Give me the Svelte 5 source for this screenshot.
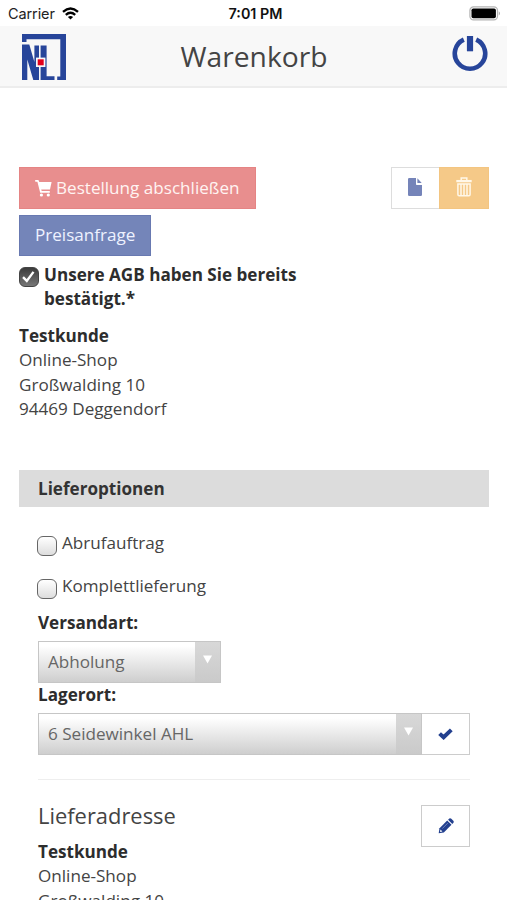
<script lang="ts">
  interface Option {
    id: string;
    label: string;
    checked: boolean;
  }

  const customer = {
    name: "Testkunde",
    lines: ["Online-Shop", "Großwalding 10", "94469 Deggendorf"],
  };

  let agbAccepted = $state(true);
  let options: Option[] = $state([
    { id: "abruf", label: "Abrufauftrag", checked: false },
    { id: "komplett", label: "Komplettlieferung", checked: false },
  ]);
</script>

{#snippet address()}
  <address>
    <strong>{customer.name}</strong>
    {#each customer.lines as line}
      <span>{line}</span>
    {/each}
  </address>
{/snippet}

{#snippet dropdown(value: string)}
  <button class="select">
    <span class="select-value">{value}</span>
    <span class="select-arrow">
      <svg width="11" height="9" viewBox="0 0 11 9"><path d="M1 .5h9L5.5 8.5z" fill="#fff" /></svg>
    </span>
  </button>
{/snippet}

<div class="screen">
  <div class="statusbar">
    <div class="carrier">
      <span>Carrier</span>
      <svg width="17" height="13" viewBox="0 0 17 13" fill="none" stroke="#000" stroke-width="2.3">
        <path d="M1 4.8Q8.5 -1.9 16 4.8" />
        <path d="M3.8 7.9Q8.5 3.7 13.2 7.9" />
        <path d="M8.5 12.6L5.9 9.9Q8.5 7.9 11.1 9.9z" fill="#000" stroke="none" />
      </svg>
    </div>
    <span class="time">7:01 PM</span>
    <svg class="battery" width="32" height="15" viewBox="0 0 32 15">
      <rect x=".9" y=".9" width="27.6" height="13" rx="3.6" fill="#fff" stroke="#b4b4b4" stroke-width="1.2" />
      <rect x="2.5" y="2.5" width="24.4" height="9.8" rx="1.8" fill="#000" />
      <path d="M29.8 5.2q2 2.2 0 4.4z" fill="#999" />
    </svg>
  </div>

  <header>
    <svg class="logo" width="46" height="48" viewBox="0 0 46 48">
      <g fill="#27459a">
        <path d="M1 1H45V47H36.2V43.5H39.3V6.3H5.5V9H1z" />
        <path d="M1 11.5H8.3L13.4 29V12.5H18V47H12.3L6.3 26.5V47H1z" />
        <path d="M19.6 12.5H25.6V43.3H33.5V47H19.6z" />
      </g>
      <rect x="15" y="24.6" width="9.4" height="9.4" fill="#f8f8f8" />
      <rect x="16.7" y="26.3" width="6" height="6" fill="#e2001a" />
    </svg>
    <h1>Warenkorb</h1>
    <svg class="power" width="36" height="37" viewBox="0 0 36 37" fill="none" stroke="#27459a">
      <path d="M11.8 4.7A15.2 15.2 0 1 0 24.2 4.7" stroke-width="4.6" />
      <path d="M18 1V16.3" stroke-width="6.2" />
    </svg>
  </header>

  <main>
    <div class="actions">
      <div class="order-buttons">
        <button class="btn order">
          <svg width="17" height="17" viewBox="0 0 17 17" fill="#fff">
            <path d="M0 .8Q0 0 .8 0H3.4L4.3 2.1H16.6L15 9.4H6.2L6.7 11H14.8V12.7H5.2L2.4 1.7H.8Q0 1.6 0 .8z" />
            <circle cx="6.4" cy="15" r="1.6" />
            <circle cx="13.3" cy="15" r="1.6" />
          </svg>
          Bestellung abschließen
        </button>
        <button class="btn inquiry">Preisanfrage</button>
      </div>
      <div class="tools">
        <button class="icon-btn faded" aria-label="Neu">
          <svg width="14" height="18" viewBox="0 0 14 18" fill="#7584b9">
            <path d="M1.2 0H8V6.3Q8 7 8.7 7H14V16.8Q14 18 12.8 18H1.2Q0 18 0 16.8V1.2Q0 0 1.2 0z" />
            <path d="M9.4 .3L13.7 5H9.4z" />
          </svg>
        </button>
        <button class="icon-btn trash" aria-label="Löschen">
          <svg width="16" height="20" viewBox="0 0 16 20" fill="none" stroke="#fff7e8" stroke-width="1.5">
            <path d="M5.2 3V.9H10.8V3" />
            <path d="M.3 4.1H15.7" stroke-width="2.3" />
            <path d="M1.9 7H14.1V17.6Q14.1 18.8 12.9 18.8H3.1Q1.9 18.8 1.9 17.6z" />
            <path d="M5 7V18M8 7V18M11 7V18" />
          </svg>
        </button>
      </div>
    </div>

    <label class="agb">
      <input type="checkbox" bind:checked={agbAccepted} />
      <span class="box">
        <svg width="17" height="17" viewBox="0 0 18 17"><path d="M3.2 9.2L7.2 13.2L14.3 3.6" fill="none" stroke="#fff" stroke-width="2.5" /></svg>
      </span>
      <strong>Unsere AGB haben Sie bereits bestätigt.*</strong>
    </label>

    {@render address()}

    <h2>Lieferoptionen</h2>

    <section>
      {#each options as option (option.id)}
        <label class="option">
          <input type="checkbox" bind:checked={option.checked} />
          <span class="box"></span>
          <span>{option.label}</span>
        </label>
      {/each}

      <strong class="field-label">Versandart:</strong>
      <div class="shipping">{@render dropdown("Abholung")}</div>

      <strong class="field-label">Lagerort:</strong>
      <div class="storage">
        {@render dropdown("6 Seidewinkel AHL")}
        <button class="icon-btn confirm" aria-label="Übernehmen">
          <svg width="15" height="12" viewBox="0 0 15 12"><path d="M1.6 5.6L5.6 9.3L13.3 1.9" fill="none" stroke="#23408f" stroke-width="4" /></svg>
        </button>
      </div>

      <div class="delivery">
        <div>
          <h3>Lieferadresse</h3>
          {@render address()}
        </div>
        <button class="icon-btn" aria-label="Bearbeiten">
          <svg width="16" height="16" viewBox="0 0 16 16">
            <path d="M.7 15.3L1.5 10.2L9.2 2.5L13.5 6.8L5.8 14.5z" fill="#23408f" />
            <path d="M10.1 1.7L11.3 .6Q12.3 -.2 13.3 .7L15.3 2.7Q16.2 3.7 15.4 4.7L14.3 5.9z" fill="#23408f" />
            <path d="M4.3 10.6L9.8 5.1" stroke="#8d9cca" stroke-width=".7" />
            <path d="M2 13.9L2.5 11.6L4.4 13.5z" fill="#fff" />
          </svg>
        </button>
      </div>
    </section>
  </main>
</div>

<style>
  :global(body) { margin: 0; background: #fff; overflow: hidden; }
  .screen { width: 507px; height: 900px; overflow: hidden; background: #fff; color: #444; font: 17.1px/24.4px "Open Sans", "Noto Sans", sans-serif; }
  .screen * { box-sizing: border-box; }
  button { margin: 0; border: 0; border-radius: 0; font: inherit; }
  strong { color: #2d2d2d; font-weight: 700; }
  svg { display: block; flex: none; }

  .statusbar { display: grid; grid-template-columns: 1fr auto 1fr; align-items: center; height: 26px; padding: 1px 6px 0 8px; color: #222; font: 14.5px/20px Inter, "Liberation Sans", sans-serif; }
  .carrier { display: flex; align-items: center; gap: 7px; letter-spacing: -0.1px; }
  .time { padding-left: 2px; color: #111; font-size: 14.3px; font-weight: 600; }
  .battery { justify-self: end; }

  header { display: grid; grid-template-columns: 50px 1fr 50px; align-items: center; height: 62px; padding: 0 18px 0 21px; background: #f8f8f8; border-bottom: 2px solid #ededed; }
  h1 { margin: 0 2px 0 0; color: #444; font-size: 28.2px; font-weight: 400; line-height: 40px; text-align: center; }
  .logo { margin-top: 2px; }
  .power { justify-self: end; margin: -6px 1px 0 0; }

  main { padding: 79px 18px 0 19px; }
  .actions { display: flex; justify-content: space-between; align-items: flex-start; }
  .order-buttons { display: flex; flex-direction: column; align-items: flex-start; gap: 6px; }
  .btn { display: flex; align-items: center; gap: 4px; height: 42px; padding: 0 15px; color: #fff4f2; white-space: nowrap; }
  .order { background: #e88e8e; border: 1px solid #e58484; }
  .inquiry { height: 41px; background: #7485b9; border: 1px solid #6879b1; color: #eef2ff; }
  .tools { display: flex; }
  .icon-btn { display: flex; align-items: center; justify-content: center; flex: none; width: 49px; height: 42px; padding: 0; background: #fff; border: 1px solid #ccc; }
  .faded { width: 48px; border-color: #ddd; border-right: 0; padding: 0 2px 3px 0; }
  .trash { width: 50px; padding-bottom: 3px; background: #f5c988; border-color: #f3c581; }

  input { position: absolute; opacity: 0; pointer-events: none; }
  .box { flex: none; width: 20px; height: 20px; border: 1.5px solid #666; border-radius: 6px; background: linear-gradient(#fff, #ddd); }
  input:checked + .box { border-color: #444; background: linear-gradient(#3c3c3c, #777); }
  .agb { display: flex; gap: 5px; width: 310px; margin-top: 7px; }
  .agb .box { margin-top: 4px; }

  address { display: flex; flex-direction: column; margin-top: 12px; font-style: normal; }
  h2 { margin: 48.6px 0 0; padding: 0 19px; background: #dcdcdc; color: #333; font-size: 17.1px; font-weight: 700; line-height: 37px; }
  section { padding: 24px 19px 0; }
  .option { display: flex; align-items: flex-start; gap: 5px; height: 43px; margin-left: -1px; }
  .option .box { margin-top: 5px; }
  .field-label { display: block; line-height: 24px; }
  .option + .field-label { margin-top: -6px; }

  .select { display: flex; align-items: stretch; width: 100%; height: 42px; padding: 0; border: 1px solid #c6c6c6; background: linear-gradient(#fff 10%, #cecece); color: #666; text-align: left; }
  .select-value { flex: 1; align-self: center; padding-left: 9px; }
  .select-arrow { display: flex; justify-content: center; width: 25px; padding-top: 13px; background: linear-gradient(#d8d8d8, #cacaca); }
  .shipping { width: 183px; padding: 6px 0 0; }
  .storage { display: flex; padding-top: 6px; }
  .confirm { border-left: 0; width: 48px; }

  .delivery { display: flex; justify-content: space-between; align-items: flex-start; margin-top: 24px; padding-top: 25px; border-top: 1px solid #eee; }
  h3 { margin: -4px 0 0; color: #444; font-size: 21.9px; font-weight: 400; line-height: 30px; }
  .delivery address { margin-top: 9px; }
</style>
